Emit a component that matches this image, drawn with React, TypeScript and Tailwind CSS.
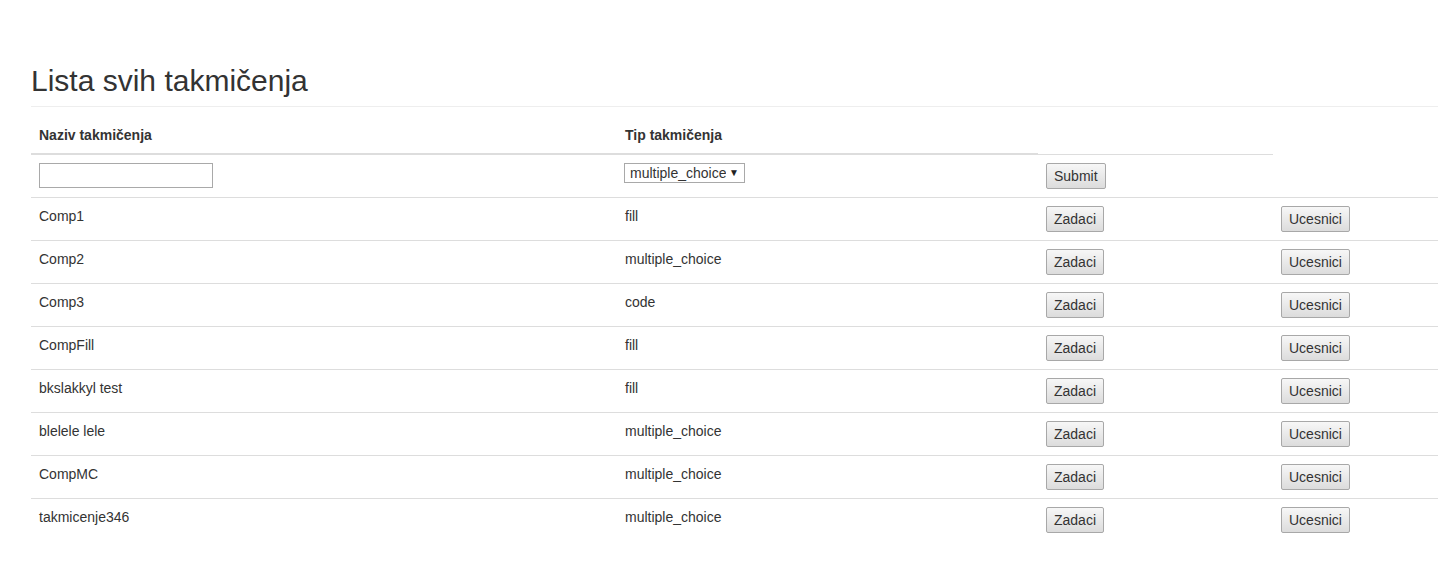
import React from "react";

const rows: [string, string][] = [
  ["Comp1", "fill"],
  ["Comp2", "multiple_choice"],
  ["Comp3", "code"],
  ["CompFill", "fill"],
  ["bkslakkyl test", "fill"],
  ["blelele lele", "multiple_choice"],
  ["CompMC", "multiple_choice"],
  ["takmicenje346", "multiple_choice"],
];

function Btn({ children }: { children: React.ReactNode }) {
  return (
    <button className="h-[26px] px-[7px] border border-[#a8a8a8] rounded-[2px] bg-gradient-to-b from-[#f7f7f7] to-[#dcdcdc] text-[14px] leading-[20px] text-[#333]">
      {children}
    </button>
  );
}

export default function App() {
  return (
    <div
      className="min-h-[572px] bg-white text-[#333] text-[14px] leading-[20px] pl-[31px]"
      style={{ fontFamily: '"Liberation Sans", Arial, sans-serif' }}
    >
      <div className="pt-[64px] pb-[9px] border-b border-[#eeeeee]">
        <h2 className="text-[30px] leading-[33px] font-normal text-[#333]">Lista svih takmičenja</h2>
      </div>
      <div className="mt-[10px] grid grid-cols-[586px_421px_235px_1fr]">
        {/* header */}
        <div className="px-[8px] py-[8px] font-bold border-b-2 border-[#dddddd]">Naziv takmičenja</div>
        <div className="px-[8px] py-[8px] font-bold border-b-2 border-[#dddddd]">Tip takmičenja</div>
        <div className="border-b border-[#dddddd] mt-[1px]"></div>
        <div></div>
        {/* filter row */}
        <div className="px-[8px] pt-[8px] pb-[8px] h-[43px] border-b border-[#dddddd]">
          <input
            type="text"
            className="w-[174px] h-[25px] border border-[#a9a9a9] bg-white px-[2px] outline-none"
          />
        </div>
        <div className="px-[7px] pt-[8px] border-b border-[#dddddd]">
          <div className="relative inline-block">
            <select className="appearance-none h-[20px] w-[121px] border border-[#a9a9a9] bg-white pl-[5px] pr-[18px] text-[14px] leading-[18px] text-[#333] outline-none">
              <option>multiple_choice</option>
              <option>fill</option>
              <option>code</option>
            </select>
            <span className="pointer-events-none absolute right-[6px] top-[3px] text-[10px] leading-[14px] text-[#222]">▼</span>
          </div>
        </div>
        <div className="px-[8px] pt-[8px] border-b border-[#dddddd]">
          <Btn>Submit</Btn>
        </div>
        <div className="border-b border-[#dddddd]"></div>
        {rows.map(([name, type], i) => {
          const b = i < rows.length - 1 ? "border-b border-[#dddddd]" : "";
          return (
            <React.Fragment key={i}>
              <div className={`px-[8px] pt-[8px] h-[43px] ${b}`}>{name}</div>
              <div className={`px-[8px] pt-[8px] ${b}`}>{type}</div>
              <div className={`px-[8px] pt-[8px] ${b}`}>
                <Btn>Zadaci</Btn>
              </div>
              <div className={`px-[8px] pt-[8px] ${b}`}>
                <Btn>Ucesnici</Btn>
              </div>
            </React.Fragment>
          );
        })}
      </div>
    </div>
  );
}
